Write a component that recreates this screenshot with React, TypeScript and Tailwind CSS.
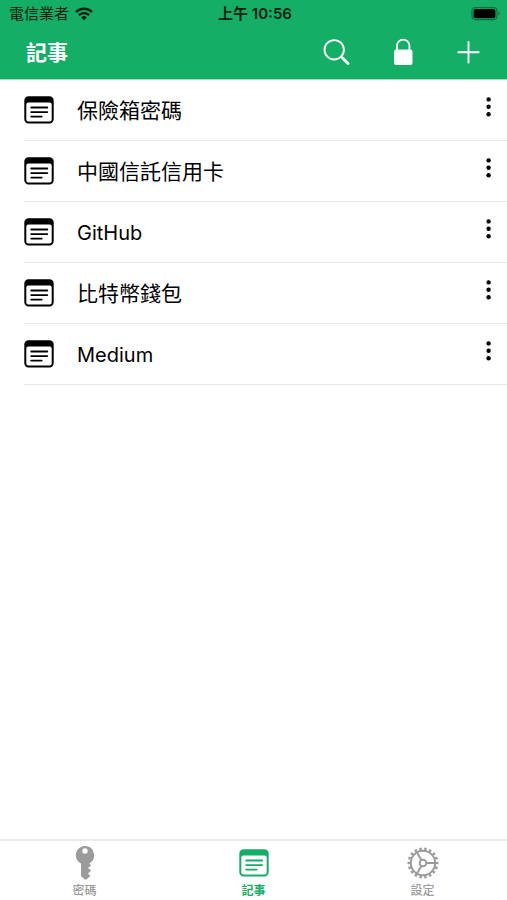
import { useState } from 'react'
import clsx from 'clsx'

interface IconProps {
  className?: string
}

const notes = ['保險箱密碼', '中國信託信用卡', 'GitHub', '比特幣錢包', 'Medium']

const tabs = [
  { id: 'passwords', label: '密碼', Icon: KeyIcon, iconSize: 'h-9 w-5' },
  { id: 'notes', label: '記事', Icon: NoteIcon, iconSize: 'h-7 w-[30px]' },
  { id: 'settings', label: '設定', Icon: GearIcon, iconSize: 'size-8' },
]

const isLatin = (text: string) => /^[\x20-\x7e]+$/.test(text)

function NoteIcon({ className }: IconProps) {
  return (
    <svg viewBox="0 0 30 28" className={className} fill="none" stroke="currentColor" aria-hidden="true">
      <path
        d="M4.5.3h21A4.2 4.2 0 0 1 29.700 4.500v18.800a4.200 4.200 0 0 1-4.200 4.200h-21A4.200 4.200 0 0 1 .3 23.300V4.500A4.200 4.200 0 0 1 4.500.3zM4.300 6.600A2 2 0 0 0 2.300 8.600v14.900a2 2 0 0 0 2 2h21.400a2 2 0 0 0 2-2V8.600a2 2 0 0 0-2-2z"
        fill="currentColor"
        fillRule="evenodd"
        stroke="none"
      />
      <path d="M7.2 11.5h16.100M7.2 16.100h16.100M7.2 20.600h10.500" strokeWidth="1.8" strokeLinecap="round" />
    </svg>
  )
}

function KeyIcon({ className }: IconProps) {
  return (
    <svg viewBox="0 0 20 36" className={className} fill="currentColor" aria-hidden="true">
      <path
        fillRule="evenodd"
        d="M10 1a9.200 9.200 0 0 0-4 17.500V31l3.600 3.600h1.800l4-3.600-2.400-2.500 3.200-3-3.200-2.500 3-2.500-1.600-2.300A9.200 9.200 0 0 0 10 1zm0 2.300a2.700 2.700 0 1 1 0 5.400 2.700 2.700 0 0 1 0-5.400z"
      />
    </svg>
  )
}

function GearIcon({ className }: IconProps) {
  return (
    <svg viewBox="0 0 32 32" className={className} fill="none" stroke="currentColor" aria-hidden="true">
      <circle cx="16" cy="16" r="12.2" strokeWidth="2" />
      {/* 18 teeth around the rim */}
      <circle cx="16" cy="16" r="14.2" strokeWidth="2.6" pathLength="72" strokeDasharray="2 2" strokeDashoffset="1" />
      <circle cx="16" cy="16" r="3.3" strokeWidth="1.9" />
      <path d="M19.3 16h9M14.4 13.1 9.9 5.4M14.4 18.9l-4.5 7.7" strokeWidth="2" />
    </svg>
  )
}

function SearchIcon() {
  return (
    <svg viewBox="0 0 28 28" className="size-7" fill="none" stroke="currentColor" aria-hidden="true">
      <circle cx="11.2" cy="11.8" r="9.7" strokeWidth="1.9" />
      <path d="m18 18.5 1.500 1.500" strokeWidth="2" />
      <path d="m19.5 20 5.5 5.5" strokeWidth="2.8" strokeLinecap="round" />
    </svg>
  )
}

function LockIcon() {
  return (
    <svg viewBox="0 0 28 28" className="size-7" aria-hidden="true">
      <rect x="5" y="11.5" width="18.5" height="15.5" rx="2.2" fill="currentColor" />
      <path d="M8 12V7.800a6.200 6.200 0 0 1 12.400 0V12" fill="none" stroke="currentColor" strokeWidth="1.8" />
    </svg>
  )
}

function PlusIcon() {
  return (
    <svg viewBox="0 0 28 28" className="size-7" fill="none" stroke="currentColor" aria-hidden="true">
      <path d="M13.5 4v20.500M3.300 14.200h20.400" strokeWidth="1.9" strokeLinecap="round" />
    </svg>
  )
}

function MoreIcon() {
  return (
    <svg viewBox="0 0 6 20" className="h-5 w-1.5" fill="currentColor" aria-hidden="true">
      <circle cx="2.6" cy="2.4" r="2.2" />
      <circle cx="2.6" cy="9.8" r="2.2" />
      <circle cx="2.6" cy="17.2" r="2.2" />
    </svg>
  )
}

function WifiIcon() {
  return (
    <svg viewBox="0 0 18 14" className="h-3.5 w-[18px]" fill="none" stroke="currentColor" aria-hidden="true">
      <path d="M1 5a11.400 11.400 0 0 1 16 0M3.900 8.200a7.200 7.200 0 0 1 10.200 0" strokeWidth="2.4" />
      <path d="M9 13.200 6.200 10.400a4 4 0 0 1 5.600 0z" fill="currentColor" stroke="none" />
    </svg>
  )
}

function BatteryIcon() {
  return (
    <svg viewBox="0 0 30 14" className="h-3.5 w-[30px]" aria-hidden="true">
      <rect x="1" y="0.6" width="25" height="12" rx="3.5" fill="none" stroke="#0b7040" strokeWidth="1.2" />
      <rect x="2.6" y="2" width="21.8" height="9.2" rx="2" fill="currentColor" />
      <path d="M27.500 4.500v4a2.300 2.300 0 0 0 0-4z" fill="#0b7040" />
    </svg>
  )
}

export default function App() {
  const [activeTab, setActiveTab] = useState('notes')

  return (
    <div className="flex min-h-screen flex-col bg-white font-['Inter','Noto_Sans_CJK_TC',sans-serif] text-black">
      <header className="border-b border-[#a3e0c2] bg-[#15ae67]">
        <div className="grid h-7 grid-cols-3 items-center pr-1.5 pl-[9px] text-[15px] leading-5 text-[#04210f]">
          <div className="flex items-center gap-1.5">
            <span>電信業者</span>
            <WifiIcon />
          </div>
          <div className="text-center font-semibold">上午 10:56</div>
          <div className="flex justify-end text-black">
            <BatteryIcon />
          </div>
        </div>
        <div className="flex h-[51px] items-center justify-between pr-4 pb-1 pl-[26px] text-white">
          <h1 className="pt-0.5 text-[21px] leading-7 font-bold">記事</h1>
          <div className="flex gap-[22px]">
            <button type="button" aria-label="搜尋" className="flex size-11 items-center justify-center">
              <SearchIcon />
            </button>
            <button type="button" aria-label="鎖定" className="flex size-11 items-center justify-center">
              <LockIcon />
            </button>
            <button type="button" aria-label="新增" className="flex size-11 items-center justify-center">
              <PlusIcon />
            </button>
          </div>
        </div>
      </header>

      <main className="flex-1">
        <ul>
          {notes.map((note) => (
            <li key={note} className="ml-6 flex h-[61px] items-center border-b border-[#e8e8e8]">
              <NoteIcon className="h-7 w-[30px] shrink-0" />
              <span
                className={clsx('ml-[23px] flex-1 pt-0.5 leading-7', isLatin(note) ? 'text-[20px]' : 'text-[21px]')}
              >
                {note}
              </span>
              <button
                type="button"
                aria-label={`${note} 選項`}
                className="flex h-full w-9 items-center justify-center pb-1.5"
              >
                <MoreIcon />
              </button>
            </li>
          ))}
        </ul>
      </main>

      <nav className="grid h-[61px] grid-cols-3 border-t-2 border-[#ebebeb]">
        {tabs.map(({ id, label, Icon, iconSize }) => (
          <button
            key={id}
            type="button"
            onClick={() => setActiveTab(id)}
            className={clsx(
              'flex flex-col items-center gap-0.5 pt-1',
              activeTab === id ? 'font-bold text-[#15ae67]' : 'font-medium text-[#9b9b9b]'
            )}
          >
            <span className="flex h-9 items-center">
              <Icon className={iconSize} />
            </span>
            <span className="text-xs leading-4">{label}</span>
          </button>
        ))}
      </nav>
    </div>
  )
}
